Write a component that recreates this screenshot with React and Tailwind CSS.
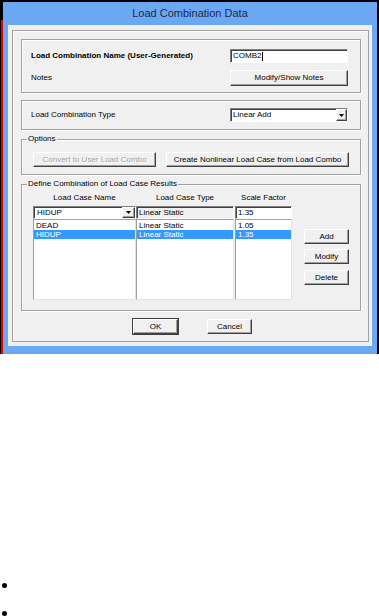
import React from "react";

const font = "font-['Liberation_Sans',Arial,sans-serif]";

const raised =
  "border border-t-white border-l-white border-r-[#404040] border-b-[#404040] shadow-[inset_-1px_-1px_0_#a0a0a0] bg-[#f0f0f0]";
const sunken =
  "border border-t-[#808080] border-l-[#808080] border-r-white border-b-white shadow-[inset_1px_1px_0_#404040]";
const listBox =
  "border border-t-[#a0a0a0] border-l-[#a0a0a0] border-r-[#e3e3e3] border-b-[#e3e3e3]";

function Btn({ children, className = "", disabled }) {
  return (
    <div
      className={`${raised} flex items-center justify-center text-[8px] leading-none ${
        disabled ? "text-[#a0a0a0] [text-shadow:1px_1px_0_white]" : "text-black"
      } ${className}`}
    >
      {children}
    </div>
  );
}

function Arrow() {
  return (
    <svg width="5" height="3" viewBox="0 0 5 3">
      <path d="M0 0h5L2.5 3z" fill="#000" />
    </svg>
  );
}

function Group({ label, className = "", children }) {
  return (
    <div
      className={`relative w-[340px] border border-[#a0a0a0] shadow-[1px_1px_0_white,inset_1px_1px_0_white] ${className}`}
    >
      {label && (
        <span className="absolute -top-[6px] left-[5px] bg-[#f0f0f0] px-[1px] text-[8px] leading-[10px] text-black">
          {label}
        </span>
      )}
      {children}
    </div>
  );
}

export default function App() {
  const rows = [
    ["DEAD", "Linear Static", "1.05"],
    ["HIDUP", "Linear Static", "1.35"],
  ];

  return (
    <div className={`w-[379px] bg-white ${font}`}>
      {/* window frame */}
      <div className="flex h-[354px] w-[379px] bg-black pt-[2px]">
        <div className="w-[1px]" />
        <div className="flex w-[2px] flex-col">
          <div className="h-[18px]" />
          <div className="flex-1 bg-[#e00000]" />
        </div>
        <div className="flex w-[374px] flex-col bg-[#6aa8f4]">
          <div className="flex h-[23px] items-center justify-center text-[11px] text-[#1f2a44]">
            Load Combination Data
          </div>
          <div className="mx-[5px] h-[321px] bg-[#f0f0f0] pb-[4px] pl-[4px] pr-[3px] pt-[5px]">
            <div className="h-[312px] border border-[#a0a0a0] pl-[8px] pt-[8px] shadow-[inset_1px_1px_0_white]">
              {/* name / notes */}
              <Group className="h-[54px]">
                <div className="flex pl-[9px] pt-[9px]">
                  <div className="flex w-[199px] items-center text-[8px] font-bold">
                    Load Combination Name (User-Generated)
                  </div>
                  <div
                    className={`${sunken} flex h-[14px] w-[118px] items-center bg-white pl-[2px] text-[8px]`}
                  >
                    COMB2
                    <span className="ml-[1px] h-[9px] w-[1px] bg-black" />
                  </div>
                </div>
                <div className="mt-[7px] flex pl-[9px]">
                  <div className="flex w-[199px] items-center text-[8px]">
                    Notes
                  </div>
                  <Btn className="h-[16px] w-[118px]">Modify/Show Notes</Btn>
                </div>
              </Group>

              {/* type */}
              <Group className="mt-[7px] h-[30px]">
                <div className="flex pl-[9px] pt-[7px]">
                  <div className="flex w-[199px] items-center text-[8px]">
                    Load Combination Type
                  </div>
                  <div
                    className={`${sunken} flex h-[14px] w-[118px] items-center bg-white pl-[2px] text-[8px]`}
                  >
                    <span className="flex-1">Linear Add</span>
                    <div className={`${raised} flex h-full w-[11px] items-center justify-center`}>
                      <Arrow />
                    </div>
                  </div>
                </div>
              </Group>

              {/* options */}
              <Group label="Options" className="mt-[9px] h-[36px]">
                <div className="flex gap-[10px] pl-[11px] pt-[12px]">
                  <Btn disabled className="h-[15px] w-[123px]">
                    Convert to User Load Combo
                  </Btn>
                  <Btn className="h-[15px] w-[183px]">
                    Create Nonlinear Load Case from Load Combo
                  </Btn>
                </div>
              </Group>

              {/* define */}
              <Group
                label="Define Combination of Load Case Results"
                className="mt-[9px] h-[127px]"
              >
                <div className="flex pl-[11px] pt-[8px]">
                  <div className="flex flex-col">
                    <div className="flex h-[10px] text-[8px] leading-[10px]">
                      <div className="w-[103px] text-center">Load Case Name</div>
                      <div className="w-[98px] text-center">Load Case Type</div>
                      <div className="ml-[1px] w-[57px] text-center">Scale Factor</div>
                    </div>
                    <div className="mt-[3px] flex h-[13px] text-[8px]">
                      <div
                        className={`${sunken} flex w-[103px] items-center bg-white pl-[3px]`}
                      >
                        <span className="flex-1">HIDUP</span>
                        <div className={`${raised} flex h-full w-[13px] items-center justify-center`}>
                          <Arrow />
                        </div>
                      </div>
                      <div className={`${sunken} flex w-[98px] items-center bg-[#f0f0f0] pl-[2px]`}>
                        Linear Static
                      </div>
                      <div className={`${sunken} ml-[1px] flex w-[57px] items-center bg-white pl-[2px]`}>
                        1.35
                      </div>
                    </div>
                    <div className="flex h-[81px] text-[8px] leading-[9px]">
                      {[0, 1, 2].map((c) => (
                        <div
                          key={c}
                          className={`${listBox} bg-white pt-[1px] ${
                            c === 0 ? "w-[103px]" : c === 1 ? "w-[98px]" : "ml-[1px] w-[57px]"
                          }`}
                        >
                          {rows.map((r, i) => (
                            <div
                              key={i}
                              className={`h-[9px] pl-[2px] ${
                                i === 1 ? "bg-[#3399ff] text-white" : "text-black"
                              }`}
                            >
                              {r[c]}
                            </div>
                          ))}
                        </div>
                      ))}
                    </div>
                  </div>
                  <div className="ml-[12px] flex flex-col pt-[36px]">
                    <Btn className="h-[15px] w-[45px]">Add</Btn>
                    <Btn className="mt-[5px] h-[15px] w-[45px]">Modify</Btn>
                    <Btn className="mt-[6px] h-[15px] w-[45px]">Delete</Btn>
                  </div>
                </div>
              </Group>

              {/* OK / Cancel */}
              <div className="ml-[112px] mt-[8px] flex gap-[29px]">
                <Btn className="h-[15px] w-[45px] outline outline-1 outline-[#404040]">
                  OK
                </Btn>
                <Btn className="h-[15px] w-[45px]">Cancel</Btn>
              </div>
            </div>
          </div>
        </div>
        <div className="w-[2px]" />
      </div>

      {/* list bullets below */}
      <div className="flex flex-col gap-[23px] pl-[2px] pt-[229px]">
        <div className="h-[5px] w-[5px] rounded-full bg-black" />
        <div className="h-[5px] w-[5px] rounded-full bg-black" />
      </div>
    </div>
  );
}
